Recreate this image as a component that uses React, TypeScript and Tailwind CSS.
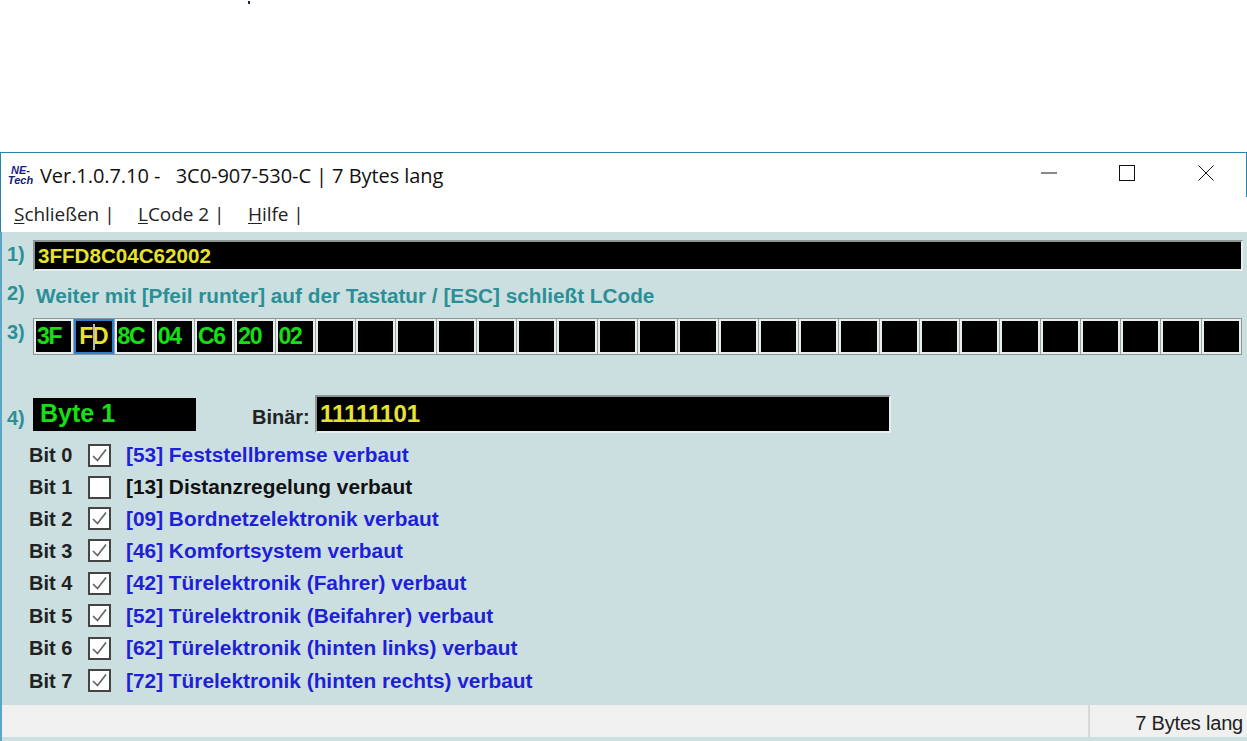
const bytes = ['3F', 'FD', '8C', '04', 'C6', '20', '02']
const cells = Array.from({ length: 30 }, (_, i) => bytes[i] ?? '')

const bits = [
  { n: 0, label: '[53] Feststellbremse verbaut', on: true, h: 'h-[32px]' },
  { n: 1, label: '[13] Distanzregelung verbaut', on: false, h: 'h-[32px]' },
  { n: 2, label: '[09] Bordnetzelektronik verbaut', on: true, h: 'h-[31px]' },
  { n: 3, label: '[46] Komfortsystem verbaut', on: true, h: 'h-[33px]' },
  { n: 4, label: '[42] Türelektronik (Fahrer) verbaut', on: true, h: 'h-[32px]' },
  { n: 5, label: '[52] Türelektronik (Beifahrer) verbaut', on: true, h: 'h-[33px]' },
  { n: 6, label: '[62] Türelektronik (hinten links) verbaut', on: true, h: 'h-[32px]' },
  { n: 7, label: '[72] Türelektronik (hinten rechts) verbaut', on: true, h: 'h-[33px]' },
]

function Check({ on }: { on: boolean }) {
  return (
    <div className="w-[23px] h-[23px] border-2 border-[#444] bg-white flex items-center justify-center shrink-0">
      {on && (
        <svg width="19" height="19" viewBox="0 0 19 19" fill="none">
          <path d="M3 10 L7.5 14.5 L16 3.5" stroke="#666" strokeWidth="1.7" />
        </svg>
      )}
    </div>
  )
}

export default function App() {
  return (
    <div className="w-[1247px] h-[741px] overflow-hidden bg-white flex flex-col">
      <div className="h-[152px] pl-[248px] pt-px shrink-0">
        <div className="w-[2px] h-[3px] bg-[#14206e]" />
      </div>

      {/* title bar */}
      <div className="h-[45px] shrink-0 flex items-center border-t border-x border-[#2a83a8] bg-white font-['Open_Sans',sans-serif] text-[#111]">
        <div className="w-[27px] ml-[6px] mt-[-1px] flex flex-col items-center text-[#1a1f8c] font-['Liberation_Sans',sans-serif] font-bold italic text-[11px] leading-[10px]">
          <span>NE-</span>
          <span className="text-[#14206e]">Tech</span>
        </div>
        <span className="ml-[6px] mt-[2px] text-[20px] tracking-[-0.06px] whitespace-pre">Ver.1.0.7.10 -   3C0-907-530-C | 7 Bytes lang</span>
        <div className="ml-auto flex items-center">
          <svg width="16" height="2" viewBox="0 0 16 2" className="mr-[62px] mb-[5px]">
            <path d="M0 1H16" stroke="#111" strokeWidth="1" />
          </svg>
          <svg width="16" height="16" viewBox="0 0 16 16" className="mr-[63px] mb-[5px]">
            <rect x="0.5" y="0.5" width="15" height="15" fill="none" stroke="#111" strokeWidth="1" />
          </svg>
          <svg width="16" height="16" viewBox="0 0 16 16" className="mr-[32px] mb-[5px]">
            <path d="M0.5 0.5L15.5 15.5M15.5 0.5L0.5 15.5" stroke="#111" strokeWidth="1" />
          </svg>
        </div>
      </div>

      {/* menu */}
      <div className="h-[35px] shrink-0 flex items-center pl-[13px] pb-[1px] bg-white border-l border-[#2a83a8] font-['Open_Sans',sans-serif] text-[19px] tracking-[-0.04px] text-[#222]">
        <span className="w-[124px]"><span className="underline underline-offset-2 decoration-1">S</span>chließen |</span>
        <span className="w-[110px]"><span className="underline underline-offset-2 decoration-1">L</span>Code 2 |</span>
        <span><span className="underline underline-offset-2 decoration-1">H</span>ilfe |</span>
      </div>

      {/* content */}
      <div className="flex-1 flex flex-col bg-[#cbdfe0] border-l-2 border-[#5aa6c8] font-['Liberation_Sans',sans-serif] font-bold">
        <div className="h-[8px] shrink-0" />
        <div className="h-[31px] shrink-0 flex">
          <span className="w-[31px] pl-[5px] text-[20px] leading-[28px] text-[#2d8f96]">1)</span>
          <div className="w-[1210px] border-2 border-[#8d9596] border-r-[#e8eeee] border-b-[#e8eeee] bg-black pl-[3px] text-[20.6px] leading-[27px] text-[#e6e32c]">
            3FFD8C04C62002
          </div>
        </div>

        <div className="h-[47px] shrink-0 flex items-center text-[20.75px] text-[#2d8f96]">
          <span className="w-[34px] pl-[5px] mt-[-3px] text-[20px]">2)</span>
          <span className="mt-[2px]">Weiter mit [Pfeil runter] auf der Tastatur / [ESC] schließt LCode</span>
        </div>

        <div className="h-[37px] shrink-0 flex">
          <span className="w-[31px] pl-[5px] text-[20px] leading-[28px] text-[#2d8f96]">3)</span>
          <div className="w-[1209px] h-[37px] grid grid-cols-[repeat(30,1fr)] gap-px border border-[#8d9596] bg-[#9aa5a5]">
            {cells.map((c, i) => (
              <div
                key={i}
                className={
                  i === 1
                    ? "relative bg-black border-2 border-[#2f7fd0] flex items-center pl-[3px] text-[23px] tracking-[-1.3px] leading-none text-[#e6e32c] overflow-hidden"
                    : "bg-black border-2 border-[#e8eeee] flex items-center pl-[1px] text-[23px] tracking-[-1.3px] leading-none text-[#14e014] overflow-hidden"
                }
              >
                {c}
                {i === 1 && <div className="absolute left-[17px] top-[3px] w-[2px] h-[26px] bg-[#b8b8b8]" />}
              </div>
            ))}
          </div>
        </div>

        <div className="h-[40px] shrink-0" />

        <div className="h-[38px] shrink-0 flex items-center">
          <span className="w-[31px] pl-[5px] text-[20px] text-[#2d8f96] mt-[8px]">4)</span>
          <div className="w-[163px] h-[33px] mt-[1px] bg-black pl-[7px] text-[25px] leading-[30px] text-[#14e014]">Byte 1</div>
          <span className="ml-[56px] w-[63px] text-[20px] text-[#222] mt-[6px]">Binär:</span>
          <div className="w-[576px] h-[38px] border-2 border-[#8d9596] border-r-[#e8eeee] border-b-[#e8eeee] bg-black pl-[3px] text-[24px] leading-[33px] text-[#e6e32c]">
            11111101
          </div>
        </div>

        <div className="h-[6px] shrink-0" />

        <div className="flex flex-col">
          {bits.map(b => (
            <div key={b.n} className={`${b.h} flex items-center text-[20px]`}>
              <span className="ml-[27px] w-[59px] text-[#222]">Bit {b.n}</span>
              <Check on={b.on} />
              <span className={b.on ? "ml-[15px] text-[20.85px] text-[#1f1fd8]" : "ml-[15px] text-[20.85px] text-[#111]"}>{b.label}</span>
            </div>
          ))}
        </div>

        <div className="flex-1" />

        {/* status bar */}
        <div className="h-[32px] shrink-0 flex bg-[#f0f0f0] font-normal text-[20px] text-[#222] mb-[4px]">
          <div className="w-[1088px] border-r-2 border-[#d8d8d8]" />
          <div className="flex-1 text-right pr-[4px] pt-[3px] tracking-[-0.2px]">7 Bytes lang</div>
        </div>
      </div>
    </div>
  )
}
